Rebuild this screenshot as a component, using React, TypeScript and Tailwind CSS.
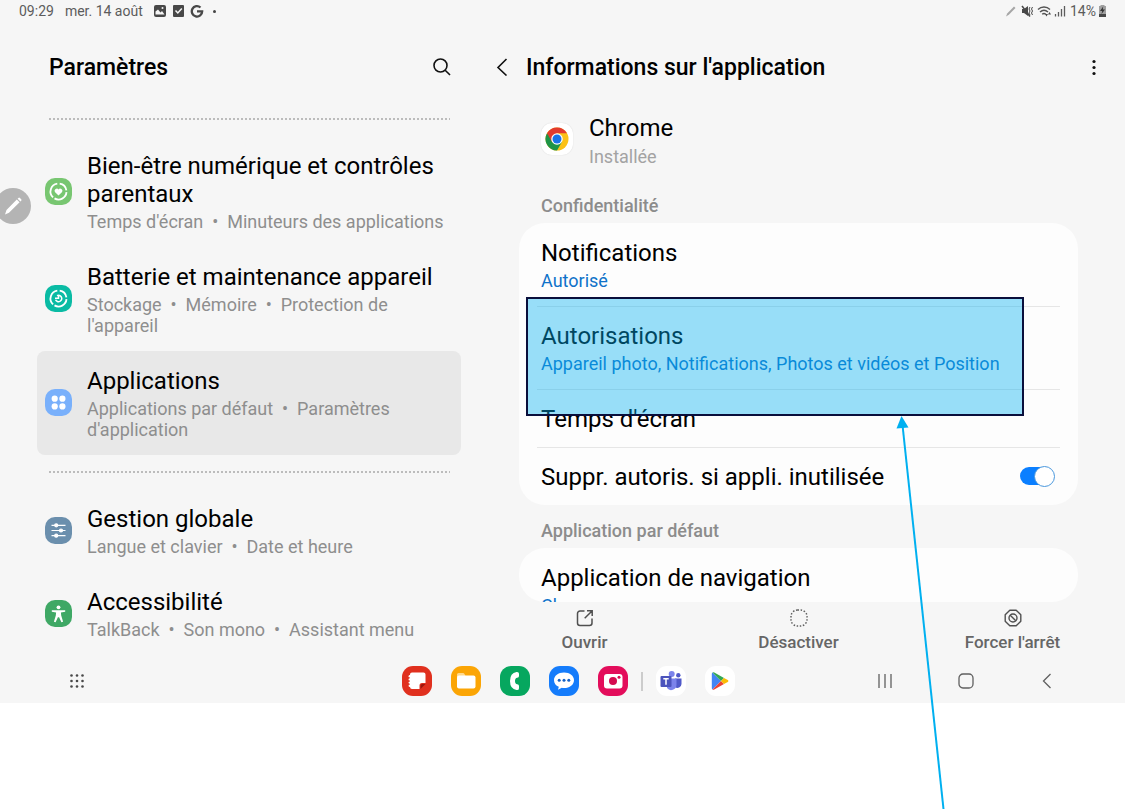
import { useState } from "react";
import type { ReactNode } from "react";

interface SettingsItem {
  title: string;
  details: string[];
  color: string;
  icon: ReactNode;
  active?: boolean;
}

const careRing = (
  <g fill="none" stroke="#fff" strokeWidth="1.8">
    <path d="M12.3 5.6A8 8 0 0 0 8.1 19.4" />
    <path d="M14.7 5.6A8 8 0 0 1 21.4 12.3" />
    <path d="M21.5 14.2A8 8 0 0 1 9.5 20.4" />
  </g>
);

const mainItems: SettingsItem[] = [
  {
    title: "Bien-être numérique et contrôles parentaux",
    details: ["Temps d'écran", "Minuteurs des applications"],
    color: "bg-[#78c671]",
    icon: (
      <>
        {careRing}
        <path d="M13.5 17.5 9.9 13.9a2.2 2.2 0 0 1 3.6-2.5 2.2 2.2 0 0 1 3.6 2.5z" fill="#fff" />
      </>
    ),
  },
  {
    title: "Batterie et maintenance appareil",
    details: ["Stockage", "Mémoire", "Protection de l'appareil"],
    color: "bg-[#0abba4]",
    icon: (
      <>
        {careRing}
        <path d="M12 10.7a3.2 3.2 0 1 1-1.4 4M10 13.2h3.5v-2.2" fill="none" stroke="#fff" strokeWidth="1.5" />
      </>
    ),
  },
  {
    title: "Applications",
    details: ["Applications par défaut", "Paramètres d'application"],
    color: "bg-[#79b0fb]",
    active: true,
    icon: (
      <g fill="#fff">
        <circle cx="9.7" cy="9.7" r="3.1" />
        <circle cx="17.4" cy="9.7" r="3.1" />
        <circle cx="9.7" cy="17.4" r="3.1" />
        <circle cx="17.4" cy="17.4" r="3.1" />
      </g>
    ),
  },
];

const generalItems: SettingsItem[] = [
  {
    title: "Gestion globale",
    details: ["Langue et clavier", "Date et heure"],
    color: "bg-[#6b8fad]",
    icon: (
      <g fill="#fff" stroke="#fff" strokeWidth="1.2">
        <path d="M6.5 8.3h14M6.5 13.5h14M6.5 18.7h14" />
        <circle cx="11.2" cy="8.3" r="1.5" />
        <circle cx="16" cy="13.5" r="1.5" />
        <circle cx="11.2" cy="18.7" r="1.5" />
      </g>
    ),
  },
  {
    title: "Accessibilité",
    details: ["TalkBack", "Son mono", "Assistant menu"],
    color: "bg-[#3fa865]",
    icon: (
      <g fill="#fff">
        <circle cx="13.5" cy="7.3" r="1.9" />
        <path d="M6.8 10.2h13.4v1.5l-4.3.8.3 3 1.900 6.300-1.700.5-2.300-5.100h-1.200l-2.300 5.100-1.700-.5 1.900-6.300.3-3-4.300-.8z" />
      </g>
    ),
  },
];

function SettingsLink({ item }: { item: SettingsItem }) {
  return (
    <a
      href="#"
      className={`flex items-center gap-[15px] rounded-lg pb-[15px] pl-2 pr-3 pt-4 ${item.active ? "bg-[#e8e8e8]" : ""}`}
    >
      <span className={`mb-0.5 h-[27px] w-[27px] shrink-0 rounded-[10px] ${item.color}`}>
        <svg viewBox="0 0 27 27" className="h-full w-full">{item.icon}</svg>
      </span>
      <span className="min-w-0">
        <span className="block text-2xl leading-7 text-black">{item.title}</span>
        <span className="mt-[3px] block text-lg leading-[21px] text-[#8e8e8e]">
          {item.details.join("\u00a0 •\u00a0 ")}
        </span>
      </span>
    </a>
  );
}

function DottedLine() {
  return (
    <svg className="my-4 ml-3 h-0.5 w-[401px] max-w-full" aria-hidden="true">
      <line x1="0" y1="1" x2="100%" y2="1" stroke="#bcbcbc" strokeWidth="2" strokeDasharray="2 2" />
    </svg>
  );
}

function StatusBar() {
  return (
    <div className="flex h-6 items-center justify-between pb-0.5 pl-[19px] pr-[18px] text-sm text-[#5c5c5c]">
      <div className="flex items-center">
        <span>09:29</span>
        <span className="ml-[11px]">mer. 14 août</span>
        <svg className="ml-2.5 h-3.5 w-14" viewBox="0 0 56 14">
          <rect x="1" y="1" width="12" height="12" rx="2" fill="#484848" />
          <path d="M2.5 10.5v-3l2.5-2 2.5 3 1.500-1.500 2.500 3.500z" fill="#f6f6f6" />
          <circle cx="9.5" cy="4" r="1" fill="#f6f6f6" />
          <rect x="20" y="1" width="11" height="12" rx="1" fill="#484848" />
          <path d="m22.5 6.500 2.300 2.500 4-4.500" fill="none" stroke="#f6f6f6" strokeWidth="1.5" />
          <path d="M47.5 3.500A5.200 5.200 0 1 0 49.200 7.300h-5.200" fill="none" stroke="#484848" strokeWidth="2.3" />
        </svg>
        <span className="ml-1 h-[3px] w-[3px] rounded-full bg-[#444]" />
      </div>
      <div className="flex items-center">
        <svg className="mr-1 h-3.5 w-[61px]" viewBox="0 0 61 14">
          <path d="m1 12.500 1.200-3L9 2.500l1.500 1.500-6.700 6.800z" fill="#a6a6a6" />
          <path d="M17 5h2l4-3v10l-4-3h-2z" fill="#484848" />
          <path d="m17 2 8 10.500" stroke="#484848" strokeWidth="1.5" />
          <path d="M25 3l-1 2 1 2-1 2 1 2M27.500 3l-1 2 1 2-1 2 1 2" fill="none" stroke="#484848" strokeWidth="1" />
          <path d="M33 5.500c3.300-3.300 8.700-3.300 12 0M35 8c2.500-2.300 5.500-2.300 8 0M37.200 10.200c1.200-1 2.400-1 3.600 0" fill="none" stroke="#555" strokeWidth="1.4" />
          <path d="m40 10 1.500 2.500L43 10zM43 10.500l1.500-2.500 1.500 2.500z" fill="#484848" />
          <path d="M50.500 10v2.500M53.500 8v4.500M56.500 5v7.500M59.500 2v10.500" stroke="#5c5c5c" strokeWidth="1.3" />
        </svg>
        <span>14%</span>
        <svg className="ml-0.5 h-3 w-[9px]" viewBox="0 0 9 12">
          <path d="M2.500 1V0h4v1H8v8H1V1z" fill="#a0a0a0" />
          <path d="M1 9h7v3H1z" fill="#484848" />
          <path d="M5.200 1.500 2 6h2.200L3.500 9 7 4.500H4.800z" fill="#333" />
        </svg>
      </div>
    </div>
  );
}

function ChromeLogo() {
  return (
    <span className="mb-1 flex h-8 w-8 shrink-0 items-center justify-center rounded-[11px] bg-white shadow-[0_0_1px_#ccc]">
      <svg viewBox="0 0 48 48" className="h-6 w-6">
        <circle cx="24" cy="24" r="23" fill="#fbc116" />
        <path d="M24 24 4.080 12.500A23 23 0 0 0 24 47l10-17.500z" fill="#1e9447" />
        <path d="M4.080 12.500A23 23 0 0 1 43.920 12.500H24L14 29.800z" fill="#e33b2e" />
        <circle cx="24" cy="24" r="11.5" fill="#fff" />
        <circle cx="24" cy="24" r="9" fill="#1a73e8" />
      </svg>
    </span>
  );
}

interface RowProps {
  title: string;
  value?: string;
  first?: boolean;
}

function InfoRow({ title, value, first }: RowProps) {
  return (
    <a
      href="#"
      className={`mx-[18px] block border-t px-1 pt-[15px] ${value ? "pb-[15px]" : "pb-3.5"} ${
        first ? "border-transparent" : "border-[#e6e6e6]"
      }`}
    >
      <span className="block text-2xl leading-7 text-black">{title}</span>
      {value && <span className="mt-[3px] block text-lg leading-[21px] text-[#0f72c9]">{value}</span>}
    </a>
  );
}

function SectionTitle({ children }: { children: ReactNode }) {
  return (
    <h2 className="px-[22px] pb-[7px] pt-[15px] text-lg font-medium leading-[21px] text-[#8c8c8c]">{children}</h2>
  );
}

function AppDetails() {
  const [revoke, setRevoke] = useState(true);

  return (
    <div className="ml-[33px] mr-[47px] max-h-[500px] overflow-hidden rounded-b-[26px]">
      <div className="flex items-center gap-4 pb-3 pl-[22px] pt-3">
        <ChromeLogo />
        <div>
          <p className="text-2xl leading-7 text-black">Chrome</p>
          <p className="mt-[3px] text-lg leading-[23px] text-[#a3a3a3]">Installée</p>
        </div>
      </div>

      <SectionTitle>Confidentialité</SectionTitle>
      <div className="rounded-[26px] bg-[#fdfdfd]">
        <InfoRow first title="Notifications" value="Autorisé" />
        <InfoRow title="Autorisations" value="Appareil photo, Notifications, Photos et vidéos et Position" />
        <InfoRow title="Temps d'écran" />
        <label className="mx-[18px] flex items-center justify-between border-t border-[#e6e6e6] pb-3.5 pl-1 pr-[5px] pt-[15px]">
          <span className="text-2xl leading-7 text-black">Suppr. autoris. si appli. inutilisée</span>
          <span className="relative mb-0.5 flex h-[21px] w-[35px] items-center">
            <input
              type="checkbox"
              role="switch"
              checked={revoke}
              onChange={(e) => setRevoke(e.target.checked)}
              className="h-[18px] w-[33px] appearance-none rounded-full bg-[#b5b5b5] checked:bg-[#0b7fff]"
            />
            <span
              className={`pointer-events-none absolute h-[21px] w-[21px] rounded-full border border-[#4a98dd] bg-white ${
                revoke ? "right-0" : "left-0"
              }`}
            />
          </span>
        </label>
      </div>

      <SectionTitle>Application par défaut</SectionTitle>
      <div className="rounded-[26px] bg-[#fdfdfd]">
        <InfoRow first title="Application de navigation" value="Chrome" />
      </div>
    </div>
  );
}

function ActionBar() {
  const button = "flex w-[123px] flex-col items-center text-[17px] font-medium leading-5 text-[#666]";
  return (
    <div className="ml-[33px] mr-[47px] flex h-[53px] justify-between px-1 pt-[7px]">
      <button className={button}>
        <svg viewBox="0 0 18 18" className="mb-[5px] h-[18px] w-[18px]" fill="none" stroke="#505050" strokeWidth="1.5">
          <path d="M8.500 2H4a2.500 2.500 0 0 0-2.500 2.500v9.500A2.500 2.500 0 0 0 4 16.500h9.500A2.500 2.500 0 0 0 16 14v-4.500M11 1.800h5.200V7M16 2 8.700 9.300" />
        </svg>
        Ouvrir
      </button>
      <button className={button}>
        <svg viewBox="0 0 18 18" className="mb-[5px] h-[18px] w-[18px]">
          <rect x="1" y="1" width="16" height="16" rx="6.5" fill="none" stroke="#606060" strokeWidth="1.5" strokeDasharray="1.5 1.64" />
        </svg>
        Désactiver
      </button>
      <button className={button}>
        <svg viewBox="0 0 18 18" className="mb-[5px] h-[18px] w-[18px]" fill="none" stroke="#505050" strokeWidth="1.4">
          <path d="M5.800 1.200h6.400l4.600 4.600v6.400l-4.600 4.600H5.800l-4.600-4.600V5.800z" strokeLinejoin="round" />
          <circle cx="9" cy="9" r="4" />
          <path d="m6.200 6.200 5.600 5.600" />
        </svg>
        Forcer l'arrêt
      </button>
    </div>
  );
}

const dockApps = [
  {
    name: "Notes",
    bg: "bg-[#e0301e]",
    icon: (
      <>
        <path d="M8 8.500q0-2 2-2h11.500q2 0 2 2V17h-3.500q-2.500 0-2.500 2.500V23H10q-2 0-2-2z" fill="#fff" />
        <path d="M18.500 23v-3q0-2 2-2h3z" fill="#9c160d" />
        <g fill="#fff">
          <circle cx="7.800" cy="10.200" r="1.200" />
          <circle cx="7.800" cy="13.400" r="1.200" />
          <circle cx="7.800" cy="16.600" r="1.200" />
          <circle cx="7.800" cy="19.800" r="1.200" />
        </g>
      </>
    ),
  },
  {
    name: "Mes fichiers",
    bg: "bg-[#fba505]",
    icon: (
      <>
        <path d="M6 8.500Q6 7 7.500 7H12q1 0 1.500 1l1 2H22v4H6z" fill="#ffd98d" />
        <rect x="6" y="9.500" width="18.500" height="13" rx="2" fill="#fff" />
      </>
    ),
  },
  {
    name: "Téléphone",
    bg: "bg-[#06a75f]",
    icon: (
      <path
        d="M16.500 6q2.500-.3 2.500 1.800v2.200q0 1.500-1.800 1.700-2.200.3-2.200 3.300t2.200 3.300q1.800.2 1.800 1.700v2.200q0 2.100-2.500 1.800Q10 23 10 15t6.500-9z"
        fill="#fff"
      />
    ),
  },
  {
    name: "Messages",
    bg: "bg-[#157cfb]",
    icon: (
      <>
        <path d="M15 6.500c5.800 0 10 3.300 10 7.700s-4.200 7.800-10 7.800c-1 0-1.500 0-2.200-.2L9 23.800l.8-3C6.800 19.500 5 17.200 5 14.200c0-4.400 4.200-7.700 10-7.700z" fill="#fff" />
        <g fill="#1462c8">
          <circle cx="10.200" cy="14.200" r="1.500" />
          <circle cx="15" cy="14.200" r="1.500" />
          <circle cx="19.800" cy="14.200" r="1.500" />
        </g>
      </>
    ),
  },
  {
    name: "Appareil photo",
    bg: "bg-[#e30d5b]",
    icon: (
      <>
        <rect x="6" y="8" width="18.500" height="14.500" rx="3" fill="#fff" />
        <circle cx="15" cy="15" r="4" fill="#d40c50" />
        <circle cx="21" cy="11.200" r="1.500" fill="#d40c50" />
      </>
    ),
  },
];

const recentApps = [
  {
    name: "Teams",
    bg: "bg-white",
    icon: (
      <>
        <circle cx="22.300" cy="9.300" r="2.200" fill="#5059c9" />
        <circle cx="15.700" cy="8" r="3" fill="#7b83eb" />
        <path d="M19 12.500h6.500V18a4 4 0 0 1-6.500 3z" fill="#5059c9" />
        <path d="M11 12.500h9.500V19a5.300 5.300 0 0 1-9.500 3z" fill="#7b83eb" />
        <rect x="4.500" y="10" width="11" height="11" rx="1" fill="#4b53bc" />
        <path d="M7.300 12.800h5.400M10 12.800v6" stroke="#fff" strokeWidth="1.5" />
      </>
    ),
  },
  {
    name: "Play Store",
    bg: "bg-white",
    icon: (
      <>
        <path d="M7.500 6.500 16 15l-8.500 8.500q-.7-.3-.7-1.500V8q0-1.200.7-1.500z" fill="#4285f4" />
        <path d="M7.500 6.500q.8-.5 1.800.1L19 12l-3 3z" fill="#34a853" />
        <path d="M7.500 23.500q.8.500 1.800-.1L19 18l-3-3z" fill="#ea4335" />
        <path d="m19 12 3.800 2.100q1.400.9 0 1.800L19 18l-3-3z" fill="#fbbc04" />
      </>
    ),
  },
];

function DockIcon({ app }: { app: (typeof dockApps)[number] }) {
  return (
    <button aria-label={app.name} className={`h-[30px] w-[30px] rounded-[11px] ${app.bg}`}>
      <svg viewBox="0 0 30 30" className="h-full w-full">{app.icon}</svg>
    </button>
  );
}

function NavigationBar() {
  return (
    <nav className="grid h-12 grid-cols-[1fr_auto_1fr] items-center pb-px pl-[11px] pt-[5px]">
      <button aria-label="Toutes les applications" className="ml-[59px] h-3.5 w-3.5">
        <svg viewBox="0 0 14 14" fill="#484848">
          {[1.5, 7, 12.5].map((y) => [1.5, 7, 12.5].map((x) => <circle key={`${x}-${y}`} cx={x} cy={y} r="1.3" />))}
        </svg>
      </button>
      <div className="flex items-center gap-[19px]">
        {dockApps.map((app) => (
          <DockIcon key={app.name} app={app} />
        ))}
        <span className="-mx-1.5 h-[19px] w-0.5 bg-[#ccc]" />
        {recentApps.map((app) => (
          <DockIcon key={app.name} app={app} />
        ))}
      </div>
      <div className="flex items-center justify-end gap-[65px] pr-[70px]">
        <button aria-label="Récents" className="h-4 w-4">
          <svg viewBox="0 0 16 16" stroke="#606060" strokeWidth="1.3">
            <path d="M2 1v14M8 1v14M14 1v14" />
          </svg>
        </button>
        <button aria-label="Accueil" className="h-4 w-4">
          <svg viewBox="0 0 16 16" fill="none" stroke="#606060" strokeWidth="1.3">
            <rect x="1" y="1" width="14" height="14" rx="4" />
          </svg>
        </button>
        <button aria-label="Retour" className="h-4 w-4">
          <svg viewBox="0 0 16 16" fill="none" stroke="#606060" strokeWidth="1.3">
            <path d="M11.500 1 4.500 8l7 7" />
          </svg>
        </button>
      </div>
    </nav>
  );
}

export default function App() {
  return (
    <div className="relative min-h-screen overflow-hidden bg-white font-[Roboto,sans-serif]">
      <div className="bg-[#f6f6f6]">
        <StatusBar />
        <div className="flex">
          <aside className="w-[43.2%] shrink-0 pl-[37px] pr-[25px]">
            <header className="flex h-[78px] items-start justify-between pl-3 pr-2.5 pt-[30px]">
              <h1 className="text-[23px] font-medium leading-7 text-black">Paramètres</h1>
              <button aria-label="Rechercher" className="mt-1 h-[18px] w-[18px]">
                <svg viewBox="0 0 18 18" fill="none" stroke="#111" strokeWidth="1.6">
                  <circle cx="7.5" cy="7.5" r="6.5" />
                  <path d="m12.200 12.200 4.800 4.800" />
                </svg>
              </button>
            </header>
            <DottedLine />
            {mainItems.map((item) => (
              <SettingsLink key={item.title} item={item} />
            ))}
            <DottedLine />
            {generalItems.map((item) => (
              <SettingsLink key={item.title} item={item} />
            ))}
          </aside>

          <main className="min-w-0 flex-1">
            <header className="flex h-[78px] items-start pl-2 pr-[22px] pt-[30px]">
              <button aria-label="Retour" className="mt-1 h-[18px] w-[18px]">
                <svg viewBox="0 0 18 18" fill="none" stroke="#111" strokeWidth="1.6">
                  <path d="M12.500 1 4 9.500l8.500 8" />
                </svg>
              </button>
              <h1 className="ml-3.5 flex-1 text-[23px] font-medium leading-7 text-black">Informations sur l'application</h1>
              <button aria-label="Plus d'options" className="mt-1 h-[18px] w-[18px]">
                <svg viewBox="0 0 18 18" fill="#111">
                  <circle cx="9" cy="3.5" r="1.6" />
                  <circle cx="9" cy="9.5" r="1.6" />
                  <circle cx="9" cy="15.5" r="1.6" />
                </svg>
              </button>
            </header>
            <AppDetails />
            <ActionBar />
          </main>
        </div>
        <NavigationBar />
      </div>

      <button
        aria-label="Stylet"
        className="absolute -left-[5px] top-[188px] flex h-9 w-9 items-center justify-center rounded-full bg-[#b4b4b4]"
      >
        <svg viewBox="0 0 20 20" className="h-5 w-5" fill="#fff">
          <path d="m2 18.500 1.500-4.500L13.800 3.500l2.800 2.800L6 16.700zM14.600 2.700l.8-.8q.7-.7 1.500 0l1.300 1.300q.7.800 0 1.500l-.8.800z" />
        </svg>
      </button>

      {/* callout drawn over the permissions row */}
      <div className="pointer-events-none absolute left-[526px] right-[101px] top-[297px] h-[119px] border-2 border-[#0a0f3c] bg-[#00b0f0]/40 bg-clip-padding" />
      <svg className="pointer-events-none absolute right-[179px] top-[415px] h-[394px] w-[52px]" viewBox="0 0 52 394">
        <path d="M8.500 10 49.500 394" stroke="#00b0f0" strokeWidth="2" />
        <path d="M7.500 1 14.500 12.500 2.500 13.500z" fill="#00b0f0" />
      </svg>
    </div>
  );
}
